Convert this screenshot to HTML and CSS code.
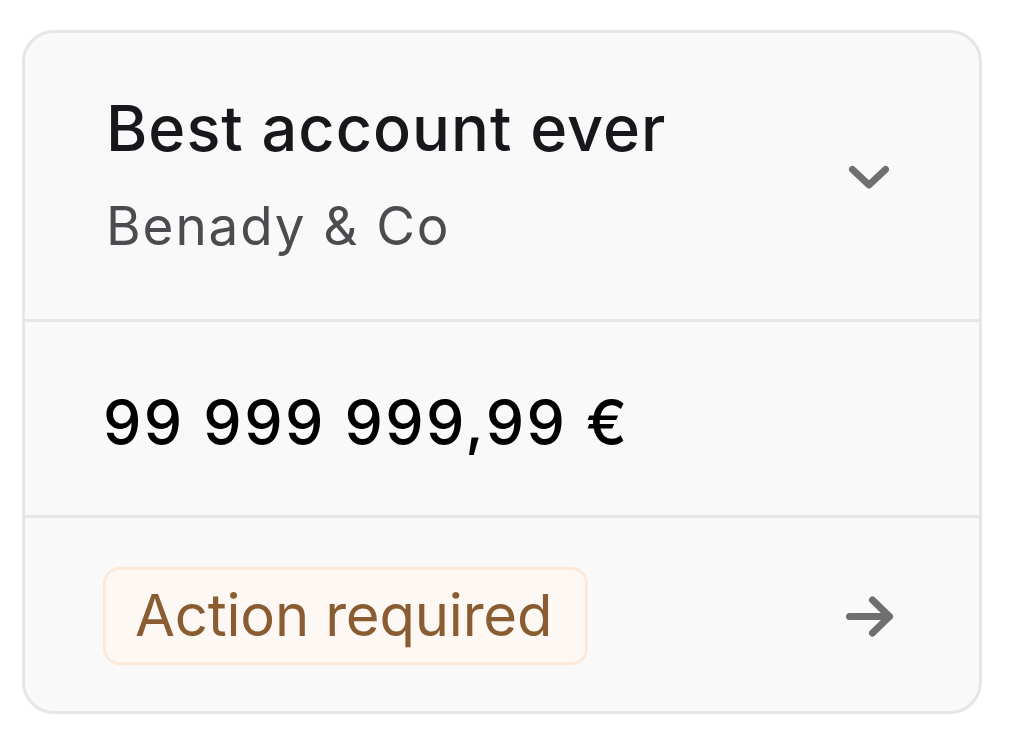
FILE: index.html
```html
<!DOCTYPE html>
<html lang="en">
<head>
<meta charset="utf-8">
<title>Account card</title>
<link rel="stylesheet" href="styles.css">
</head>
<body>
  <div class="card">
    <div class="section header">
      <div class="names">
        <div class="title">Best account ever</div>
        <div class="subtitle">Benady &amp; Co</div>
      </div>
      <svg class="icon" width="60" height="60" viewBox="0 0 60 60" aria-hidden="true">
        <path d="M13.5 25.5 L30 41 L46.5 25.5" fill="none" stroke="#6f6f6f" stroke-width="7" stroke-linecap="round" stroke-linejoin="round"/>
      </svg>
    </div>
    <div class="section amount">99 999 999,99 €</div>
    <div class="section footer">
      <span class="badge">Action required</span>
      <svg class="icon" width="60" height="60" viewBox="0 0 60 60" aria-hidden="true">
        <path d="M10.5 30.5 H50.5 M33.5 14 L50.5 30.5 L33.5 47" fill="none" stroke="#6f6f6f" stroke-width="7" stroke-linecap="round" stroke-linejoin="round"/>
      </svg>
    </div>
  </div>
</body>
</html>
```

FILE: styles.css
```css
html, body {
  margin: 0;
  padding: 0;
  background: #ffffff;
}

body {
  padding: 30px 28px 0 22px;
  font-family: Inter, "Noto Sans", sans-serif;
}

.card {
  width: 960px;
  box-sizing: border-box;
  border: 3px solid #e6e6e6;
  border-radius: 32px;
  background: #f9f9f9;
  overflow: hidden;
}

.section {
  display: flex;
  align-items: center;
  justify-content: space-between;
  padding-left: 78px;
  padding-right: 80px;
}

.section + .section {
  border-top: 3px solid #e6e6e6;
}

.header {
  padding-left: 81px;
  padding-top: 57px;
  padding-bottom: 61px;
}

.names {
  display: flex;
  flex-direction: column;
  gap: 28px;
}

.title {
  font-size: 63px;
  line-height: 76px;
  font-weight: 500;
  letter-spacing: 1px;
  color: #17171c;
}

.subtitle {
  font-size: 53px;
  line-height: 64px;
  font-weight: 400;
  letter-spacing: 1.9px;
  color: #4b4b50;
}

.amount {
  padding-top: 65px;
  padding-bottom: 58px;
  font-size: 61px;
  line-height: 70px;
  font-weight: 500;
  letter-spacing: 2.4px;
  color: #000000;
}

.footer {
  padding-top: 49px;
  padding-bottom: 46px;
}

.badge {
  display: inline-block;
  padding: 10px 33px 12px 29px;
  border: 3px solid #fbe9d9;
  border-radius: 16px;
  background: #fdf8f4;
  color: #8a5c32;
  font-size: 58px;
  line-height: 70px;
  font-weight: 400;
  letter-spacing: -0.2px;
}

.icon {
  display: block;
  flex: none;
}
```
